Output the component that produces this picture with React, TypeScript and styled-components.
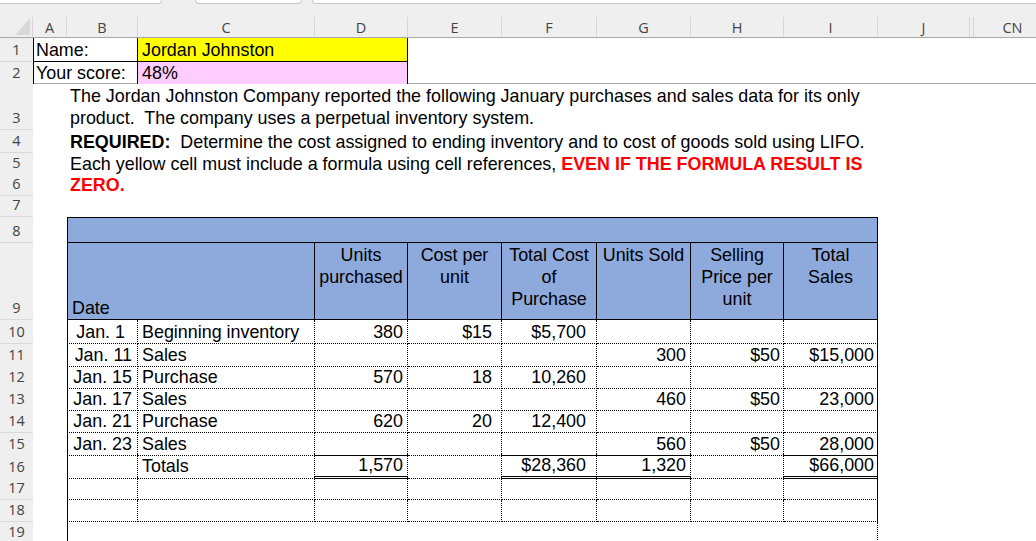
import React from 'react';
import styled, { createGlobalStyle } from 'styled-components';

const COLS = '33px 34px 71px 177px 93px 94px 95px 94px 93px 94px 92px 4px 78px';
const BLUE = '#8ea9db';

type Edge = 'solid' | 'dotted' | 'double';

const edge = (e?: Edge) => {
  if (!e) return 'none';
  if (e === 'double') return '3px double #000';
  return `1px ${e} #000`;
};

const GlobalStyle = createGlobalStyle`
  html, body {
    margin: 0;
    padding: 0;
    background: #fff;
    overflow: hidden;
  }
  * {
    box-sizing: border-box;
  }
`;

const Sheet = styled.div`
  width: 1036px;
  height: 541px;
  overflow: hidden;
  font-family: 'Liberation Sans', Arial, sans-serif;
  font-size: 17.9px;
  color: #000;
`;

const TopStrip = styled.div`
  display: flex;
  align-items: flex-start;
  height: 17px;
  background: #efefef;
  overflow: hidden;
`;

const Tab = styled.div<{ $w: number; $ml?: number }>`
  flex: none;
  width: ${(p) => p.$w}px;
  margin-left: ${(p) => p.$ml ?? 0}px;
  height: 4px;
  background: #fff;
  border: 1px solid #c9c9c9;
  border-top: none;
  border-radius: 0 0 5px 5px;
`;

const ColHeaders = styled.div`
  display: grid;
  grid-template-columns: ${COLS};
  height: 21px;
  background: #efefef;
  border-bottom: 1px solid #a8a8a8;
`;

const Corner = styled.div`
  border-right: 1px solid #d6d6d6;
  svg {
    display: block;
  }
`;

const ColLetter = styled.div`
  display: flex;
  align-items: center;
  justify-content: center;
  border-right: 1px solid #d6d6d6;
  font-family: 'Open Sans', 'Noto Sans', sans-serif;
  font-size: 14.5px;
  color: #444;
`;

const Row = styled.div<{ $h: number; $frozen?: boolean }>`
  display: grid;
  grid-template-columns: ${COLS};
  height: ${(p) => p.$h}px;
  border-bottom: ${(p) => (p.$frozen ? '1px solid #a8a8a8' : 'none')};
`;

const RowNum = styled.div<{ $noLine?: boolean }>`
  grid-column: 1;
  display: flex;
  align-items: flex-end;
  justify-content: center;
  padding-bottom: 2px;
  background: #efefef;
  border-bottom: ${(p) => (p.$noLine ? 'none' : '1px solid #d9d9d9')};
  font-family: 'Open Sans', 'Noto Sans', sans-serif;
  font-size: 14.5px;
  line-height: 18px;
  color: #444;
`;

const Cell = styled.div<{
  $col: string;
  $bg?: string;
  $l?: Edge;
  $r?: Edge;
  $t?: Edge;
  $b?: Edge;
  $align?: 'left' | 'right' | 'center';
  $pl?: number;
  $pr?: number;
}>`
  grid-column: ${(p) => p.$col};
  display: flex;
  align-items: center;
  justify-content: ${(p) =>
    p.$align === 'right' ? 'flex-end' : p.$align === 'center' ? 'center' : 'flex-start'};
  padding: 0 ${(p) => p.$pr ?? 3}px 0 ${(p) => p.$pl ?? 3}px;
  background: ${(p) => p.$bg ?? 'transparent'};
  border-left: ${(p) => edge(p.$l)};
  border-right: ${(p) => edge(p.$r)};
  border-top: ${(p) => edge(p.$t)};
  border-bottom: ${(p) => edge(p.$b)};
  white-space: pre;
  line-height: 22px;
  min-width: 0;
`;

const Para = styled(Cell)`
  flex-direction: column;
  align-items: flex-start;
  justify-content: center;
`;

const HeadCell = styled(Cell)`
  display: block;
  text-align: center;
  padding-top: 1px;
  white-space: normal;
`;

const DateHead = styled(Cell)`
  align-items: flex-end;
`;

const Strong = styled.span<{ $red?: boolean }>`
  font-weight: bold;
  color: ${(p) => (p.$red ? '#ff0000' : '#000')};
`;

const letters = ['A', 'B', 'C', 'D', 'E', 'F', 'G', 'H', 'I', 'J', '', 'CN'];

type Entry = {
  n: number;
  h: number;
  date?: string;
  datePr?: number;
  desc?: string;
  d?: string;
  e?: string;
  f?: string;
  g?: string;
  hh?: string;
  i?: string;
  under?: Edge;
};

const entries: Entry[] = [
  { n: 10, h: 24, date: 'Jan. 1', datePr: 12, desc: 'Beginning inventory', d: '380', e: '$15', f: '$5,700' },
  { n: 11, h: 22, date: 'Jan. 11', desc: 'Sales', g: '300', hh: '$50', i: '$15,000' },
  { n: 12, h: 22, date: 'Jan. 15', desc: 'Purchase', d: '570', e: '18', f: '10,260' },
  { n: 13, h: 22, date: 'Jan. 17', desc: 'Sales', g: '460', hh: '$50', i: '23,000' },
  { n: 14, h: 23, date: 'Jan. 21', desc: 'Purchase', d: '620', e: '20', f: '12,400' },
  { n: 15, h: 21, date: 'Jan. 23', desc: 'Sales', g: '560', hh: '$50', i: '28,000', under: 'solid' },
  { n: 16, h: 23, desc: 'Totals', d: '1,570', f: '$28,360', g: '1,320', i: '$66,000', under: 'double' },
  { n: 17, h: 23 },
  { n: 18, h: 22 },
];

type ColDef = {
  key: 'date' | 'desc' | 'd' | 'e' | 'f' | 'g' | 'hh' | 'i';
  col: string;
  align: 'left' | 'right';
  pl?: number;
  pr?: number;
  total?: boolean;
};

const dataCols: ColDef[] = [
  { key: 'date', col: '3', align: 'right', pr: 5 },
  { key: 'desc', col: '4', align: 'left', pl: 4 },
  { key: 'd', col: '5', align: 'right', pr: 4, total: true },
  { key: 'e', col: '6', align: 'right', pr: 9 },
  { key: 'f', col: '7', align: 'right', pr: 10, total: true },
  { key: 'g', col: '8', align: 'right', pr: 4, total: true },
  { key: 'hh', col: '9', align: 'right', pr: 3 },
  { key: 'i', col: '10', align: 'right', pr: 3, total: true },
];

const App = () => {
  return (
    <Sheet>
      <GlobalStyle />
      <TopStrip>
        <Tab $w={168} $ml={-6} />
        <Tab $w={107} $ml={33} />
        <Tab $w={800} $ml={10} />
      </TopStrip>

      <ColHeaders>
        <Corner>
          <svg width="32" height="20" viewBox="0 0 32 20">
            <polygon points="15,18 30,18 30,1" fill="#d9d9d9" />
          </svg>
        </Corner>
        {letters.map((l, idx) => (
          <ColLetter key={idx}>{l}</ColLetter>
        ))}
      </ColHeaders>

      <Row $h={24}>
        <RowNum>1</RowNum>
        <Cell $col="2 / 4" $l="solid" $r="solid" $b="solid" $pl={2}>
          Name:
        </Cell>
        <Cell $col="4 / 6" $bg="#ffff00" $r="solid" $b="solid" $pl={4}>
          Jordan Johnston
        </Cell>
      </Row>

      <Row $h={22} $frozen>
        <RowNum $noLine>2</RowNum>
        <Cell $col="2 / 4" $l="solid" $r="solid" $pl={2}>
          Your score:
        </Cell>
        <Cell $col="4 / 6" $bg="#ffccff" $r="solid" $pl={4}>
          48%
        </Cell>
      </Row>

      <Row $h={46}>
        <RowNum>3</RowNum>
        <Para $col="3 / 13">
          <span>
            The Jordan Johnston Company reported the following January purchases and sales data for its only
          </span>
          <span>product.  The company uses a perpetual inventory system.</span>
        </Para>
      </Row>

      <Row $h={23}>
        <RowNum>4</RowNum>
        <Cell $col="3 / 13">
          <Strong>REQUIRED:</Strong>
          {'  Determine the cost assigned to ending inventory and to cost of goods sold using LIFO.'}
        </Cell>
      </Row>

      <Row $h={21}>
        <RowNum>5</RowNum>
        <Cell $col="3 / 13">
          {'Each yellow cell must include a formula using cell references, '}
          <Strong $red>EVEN IF THE FORMULA RESULT IS</Strong>
        </Cell>
      </Row>

      <Row $h={22}>
        <RowNum>6</RowNum>
        <Cell $col="3 / 13">
          <Strong $red>ZERO.</Strong>
        </Cell>
      </Row>

      <Row $h={21}>
        <RowNum>7</RowNum>
      </Row>

      <Row $h={26}>
        <RowNum>8</RowNum>
        <Cell $col="3 / 11" $bg={BLUE} $l="solid" $r="solid" $t="solid" $b="solid" />
      </Row>

      <Row $h={77}>
        <RowNum>9</RowNum>
        <DateHead $col="3 / 5" $bg={BLUE} $l="solid" $r="solid" $b="solid" $pl={4}>
          Date
        </DateHead>
        <HeadCell $col="5" $bg={BLUE} $r="solid" $b="solid">
          Units
          <br />
          purchased
        </HeadCell>
        <HeadCell $col="6" $bg={BLUE} $r="solid" $b="solid">
          Cost per
          <br />
          unit
        </HeadCell>
        <HeadCell $col="7" $bg={BLUE} $r="solid" $b="solid">
          Total Cost
          <br />
          of
          <br />
          Purchase
        </HeadCell>
        <HeadCell $col="8" $bg={BLUE} $r="solid" $b="solid">
          Units Sold
        </HeadCell>
        <HeadCell $col="9" $bg={BLUE} $r="solid" $b="solid">
          Selling
          <br />
          Price per
          <br />
          unit
        </HeadCell>
        <HeadCell $col="10" $bg={BLUE} $r="solid" $b="solid">
          Total
          <br />
          Sales
        </HeadCell>
      </Row>

      {entries.map((row) => (
        <Row key={row.n} $h={row.h}>
          <RowNum>{row.n}</RowNum>
          {dataCols.map((c) => (
            <Cell
              key={c.key}
              $col={c.col}
              $align={c.align}
              $pl={c.pl}
              $pr={c.key === 'date' && row.datePr ? row.datePr : c.pr}
              $l={c.key === 'date' ? 'solid' : undefined}
              $r={c.key === 'i' ? 'solid' : 'dotted'}
              $b={c.total && row.under ? row.under : 'dotted'}
            >
              {row[c.key] ?? ''}
            </Cell>
          ))}
        </Row>
      ))}

      <Row $h={22}>
        <RowNum>19</RowNum>
        <Cell $col="3 / 11" $l="solid" $r="dotted" />
      </Row>
    </Sheet>
  );
};

export default App;
